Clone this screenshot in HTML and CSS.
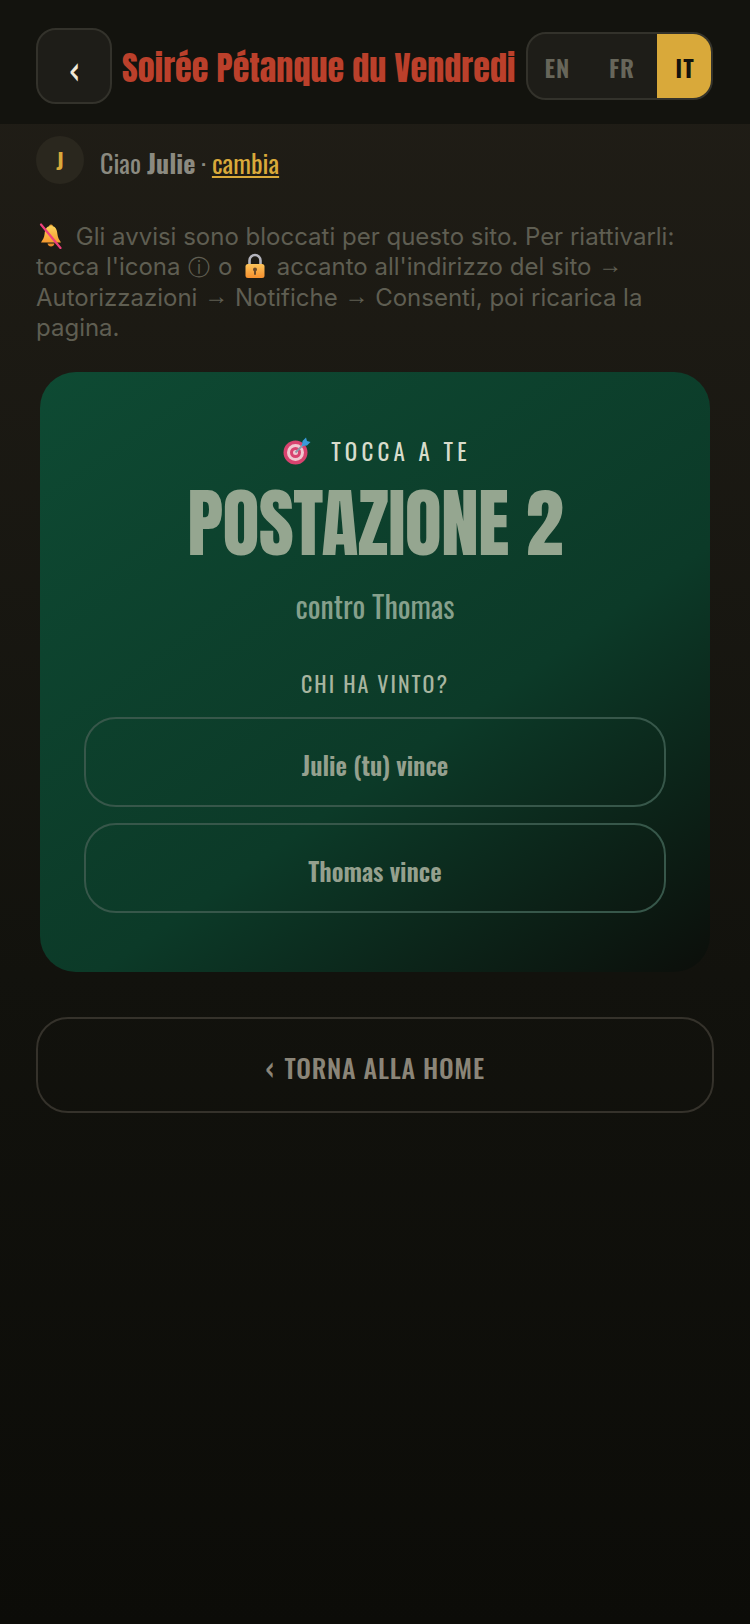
FILE: index.html
```html
<!DOCTYPE html>
<html lang="en">
<head>
  <meta charset="UTF-8">
  <title>Soirée Pétanque du Vendredi</title>
  <link rel="stylesheet" href="styles.css">
</head>
<body>
  <header class="topbar">
    <button class="back-btn">‹</button>
    <h1 class="title">Soirée Pétanque du Vendredi</h1>
    <div class="lang">
      <span class="lang-item">EN</span>
      <span class="lang-item">FR</span>
      <span class="lang-item active">IT</span>
    </div>
  </header>

  <div class="hello">
    <div class="avatar">J</div>
    <div class="hello-text">Ciao <strong>Julie</strong> · <a href="#">cambia</a></div>
  </div>

  <p class="notice">
    <svg class="emoji" viewBox="0 0 26 26">
      <defs>
        <linearGradient id="bell" x1="0" y1="0" x2="0" y2="1">
          <stop offset="0" stop-color="#fbd25a"/>
          <stop offset="1" stop-color="#f59a2f"/>
        </linearGradient>
      </defs>
      <circle cx="13" cy="3.500" r="2" fill="#e9a63a"/>
      <path d="M13 3c4.500 0 6 3.500 6.400 8 .3 3.600 2 6 3.600 8.400H3c1.600-2.400 3.300-4.800 3.600-8.400C7 6.500 8.500 3 13 3z" fill="url(#bell)"/>
      <path d="M9.500 20.500h7c-.4 2-1.800 3-3.500 3s-3.100-1-3.500-3z" fill="#e58a2a"/>
      <path d="M3 1.500 L22.500 25" stroke="#ee3f7c" stroke-width="2.200" stroke-linecap="round"/>
    </svg>
    Gli avvisi sono bloccati per questo sito. Per riattivarli: tocca l'icona <span class="info">ⓘ</span> o
    <svg class="emoji emoji-lock" viewBox="0 0 26 26">
      <defs>
        <linearGradient id="lock" x1="0" y1="0" x2="0" y2="1">
          <stop offset="0" stop-color="#fdc45a"/>
          <stop offset="1" stop-color="#f58f2e"/>
        </linearGradient>
      </defs>
      <path d="M7.500 12V7.500a5.500 5.500 0 0 1 11 0V12" fill="none" stroke="#b4b4bc" stroke-width="2.600"/>
      <rect x="3.500" y="11" width="19" height="14" rx="2.500" fill="url(#lock)"/>
      <circle cx="13" cy="16.500" r="2" fill="#6b4a2a"/>
      <rect x="12" y="17" width="2" height="5" rx="1" fill="#6b4a2a"/>
    </svg>
    accanto all'indirizzo del sito <span class="arrow">→</span> Autorizzazioni <span class="arrow">→</span> Notifiche <span class="arrow">→</span> Consenti, poi ricarica la pagina.
  </p>

  <section class="card">
    <div class="turn">
      <svg class="emoji-target" viewBox="0 0 28 28">
        <circle cx="12.500" cy="15.500" r="12" fill="#d8436f"/>
        <circle cx="12.500" cy="15.500" r="8.500" fill="#f0c8d0"/>
        <circle cx="12.500" cy="15.500" r="5.500" fill="#d8436f"/>
        <circle cx="12.500" cy="15.500" r="2.500" fill="#f0c8d0"/>
        <path d="M12.500 15.500 L23 5" stroke="#8a9aa8" stroke-width="1.800"/>
        <path d="M19 9 L19.500 4 L23 0.500 L24 4 L27.500 5 L24 8.500z" fill="#3a9ad9"/>
      </svg>
      <span class="turn-text">TOCCA A TE</span>
    </div>
    <div class="station">POSTAZIONE 2</div>
    <div class="versus">contro Thomas</div>
    <div class="ask">CHI HA VINTO?</div>
    <button class="win-btn">Julie (tu) vince</button>
    <button class="win-btn">Thomas vince</button>
  </section>

  <button class="home-btn"><span class="home-chevron">‹</span>TORNA ALLA HOME</button>
</body>
</html>
```

FILE: styles.css
```css
* {
  box-sizing: border-box;
}

html {
  background: #0c0c08;
}

body {
  margin: 0;
  min-height: 1624px;
  background: linear-gradient(180deg, #211e17 0%, #12120d 60%, #0c0c08 100%);
  color: #f0e8d8;
  font-family: Inter, sans-serif;
}

.topbar {
  display: flex;
  align-items: center;
  height: 124px;
  padding: 8px 37px 0 36px;
  background: #13130e;
}

.back-btn {
  flex: none;
  width: 76px;
  height: 76px;
  border: 2px solid #33322b;
  border-radius: 20px;
  background: #1e1d18;
  color: #f0e8d8;
  font-family: Oswald, sans-serif;
  font-size: 36px;
}

.title {
  flex: 1;
  margin: 0 0 0 10px;
  padding-top: 2px;
  color: #bb402b;
  font-family: Anton, sans-serif;
  font-size: 34px;
  font-weight: 400;
  letter-spacing: 0.1px;
  white-space: nowrap;
}

.lang {
  display: grid;
  grid-template-columns: 65px 64px 1fr;
  flex: none;
  width: 187px;
  height: 68px;
  border: 2px solid #33322b;
  border-radius: 20px;
  background: #1e1d18;
  overflow: hidden;
}

.lang-item {
  display: flex;
  align-items: center;
  justify-content: center;
  padding: 2px 6px 0 0;
  color: #67665a;
  font-family: Oswald, sans-serif;
  font-size: 24px;
  font-weight: 600;
  letter-spacing: 1px;
}

.lang-item.active {
  padding: 2px 0 0 2px;
  background: #d9a93a;
  color: #13130e;
}

.hello {
  display: flex;
  align-items: center;
  gap: 16px;
  margin-top: 12px;
  padding: 0 36px;
}

.avatar {
  display: flex;
  align-items: center;
  justify-content: center;
  width: 48px;
  height: 48px;
  border-radius: 50%;
  background: #2a271e;
  color: #d9a93a;
  font-family: Oswald, sans-serif;
  font-size: 22px;
  font-weight: 600;
}

.hello-text {
  padding-top: 4px;
  color: #8b8a80;
  font-family: Oswald, sans-serif;
  font-size: 26px;
}

.hello-text a {
  color: #d9a93a;
}

.notice {
  margin: 38px 36px 0;
  color: #5f5e52;
  font-size: 24px;
  line-height: 30.3px;
}

.arrow {
  font-family: "Liberation Sans", sans-serif;
  line-height: 1;
  vertical-align: 2px;
}

.info {
  margin: 0 1px;
  font-size: 22px;
  font-weight: 200;
  line-height: 1;
}

.emoji {
  width: 26px;
  height: 26px;
  margin: 0 5px 0 2px;
  vertical-align: -4px;
}

.emoji-lock {
  margin: 0 2px 0 3px;
}

.card {
  display: flex;
  flex-direction: column;
  align-items: center;
  width: 670px;
  height: 600px;
  margin: 29px 0 0 40px;
  padding: 62px 44px 0;
  border-radius: 36px;
  background: linear-gradient(145deg, #0e4a33 0%, #0c3a28 60%, #0c0e0a 100%);
}

.turn {
  display: flex;
  align-items: center;
  gap: 20px;
  padding-left: 4px;
  color: #d8dccb;
  font-family: Oswald, sans-serif;
  font-size: 23px;
}

.emoji-target {
  width: 28px;
  height: 28px;
}

.turn-text {
  letter-spacing: 4.2px;
}

.station {
  margin-top: 13px;
  color: #95a690;
  font-family: Anton, sans-serif;
  font-size: 76px;
  line-height: 84px;
  letter-spacing: -0.7px;
}

.versus {
  margin-top: 18px;
  color: #86a08c;
  font-family: Oswald, sans-serif;
  font-size: 30px;
}

.ask {
  margin: 39px 0 2px;
  color: #a8b5a0;
  font-family: Oswald, sans-serif;
  font-size: 22px;
  letter-spacing: 2px;
}

.win-btn {
  flex: none;
  width: 582px;
  height: 90px;
  margin-top: 16px;
  padding-top: 6px;
  border: 2px solid #37574a;
  border-radius: 32px;
  background: transparent;
  color: #95a08e;
  font-family: Oswald, sans-serif;
  font-size: 25px;
  font-weight: 600;
}

.home-btn {
  display: block;
  width: 678px;
  height: 96px;
  margin: 45px 0 0 36px;
  padding-top: 6px;
  border: 2px solid #35322b;
  border-radius: 32px;
  background: transparent;
  color: #8b8578;
  font-family: Oswald, sans-serif;
  font-size: 26px;
  font-weight: 500;
  letter-spacing: 0.8px;
}

.home-chevron {
  margin-right: 10px;
  font-size: 30px;
  line-height: 1;
}
```
